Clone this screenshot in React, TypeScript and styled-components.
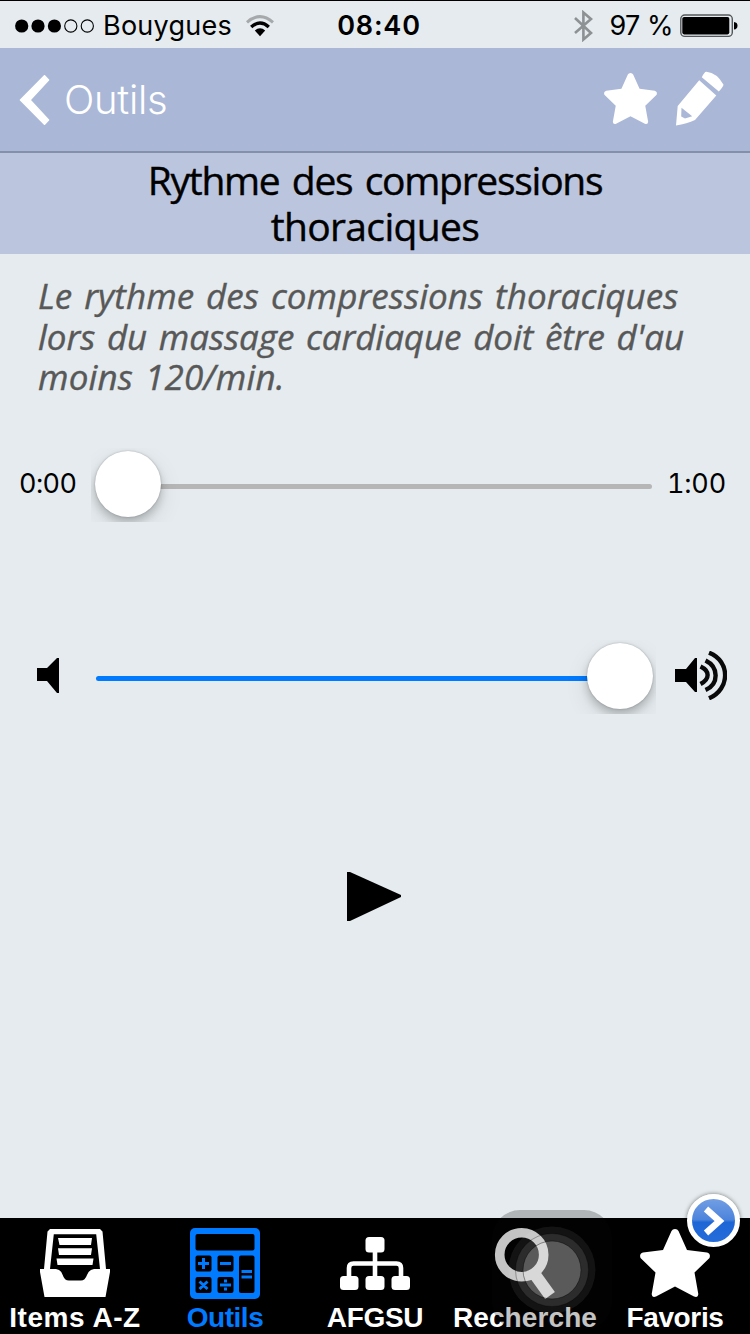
import React from 'react';
import styled, { createGlobalStyle, css } from 'styled-components';

const Global = createGlobalStyle`
  * { box-sizing: border-box; }
  body { margin: 0; background: #e5ebee; }
  svg { display: block; flex: none; }
`;

const Screen = styled.div`
  width: 750px;
  height: 1334px;
  display: flex;
  flex-direction: column;
  background: #e5ebee;
  color: #000;
  font-family: Inter, "Liberation Sans", sans-serif;
  position: relative;
  overflow: hidden;
`;

const StatusBar = styled.header`
  height: 48px;
  flex: none;
  display: grid;
  grid-template-columns: 1fr auto 1fr;
  align-items: center;
  padding: 2px 12px 0 15px;
  border-top: 1px solid #000;
  font-size: 27px;
  line-height: 45px;
`;

const StatusGroup = styled.div<{ $end?: boolean }>`
  display: flex;
  align-items: center;
  justify-content: ${p => (p.$end ? 'flex-end' : 'flex-start')};
  white-space: nowrap;
`;

const Carrier = styled.span`
  margin: 0 14px 0 8px;
  letter-spacing: 0.25px;
`;

const Clock = styled.span`
  padding-left: 5px;
  font-weight: 600;
  letter-spacing: 0.8px;
`;

const Percent = styled.span`
  margin: 0 7px 0 16px;
  letter-spacing: -0.5px;
`;

const NavBar = styled.nav`
  height: 105px;
  flex: none;
  display: flex;
  align-items: center;
  padding: 0 26px 0 19px;
  background: #aab7d6;
  border-bottom: 2px solid #8490a8;
  color: #fff;
`;

const BackLabel = styled.span`
  flex: 1;
  margin-left: 14px;
  font-size: 40px;
  font-weight: 300;
  line-height: 48px;
  letter-spacing: -0.3px;
`;

const Actions = styled.div`
  display: flex;
  align-items: center;
  gap: 18px;
  padding-bottom: 2px;
`;

const TitleBand = styled.h1`
  height: 101px;
  flex: none;
  margin: 0;
  padding-top: 4px;
  background: #bbc5de;
  text-align: center;
  word-spacing: 3.5px;
  font: 400 39px/46px "Open Sans", "Noto Sans", sans-serif;
  -webkit-text-stroke: 0.4px currentColor;
`;

const Line = styled.span<{ $track: number }>`
  display: block;
  white-space: nowrap;
  letter-spacing: ${p => p.$track}px;
`;

const Advice = styled.p`
  height: 124px;
  flex: none;
  margin: 22px 0 0 38px;
  color: #585858;
  word-spacing: 2.7px;
  font: italic 400 35px/40.5px "Open Sans", "Noto Sans", sans-serif;
  -webkit-text-stroke: 0.4px currentColor;
`;

const SliderRow = styled.div<{ $top: number }>`
  height: 74px;
  flex: none;
  display: flex;
  align-items: center;
  margin-top: ${p => p.$top}px;
`;

const SideCell = styled.div<{ $width: number; $pad: number; $lift: number; $track?: number }>`
  width: ${p => p.$width}px;
  flex: none;
  padding: 0 0 ${p => p.$lift}px ${p => p.$pad}px;
  font-size: 27px;
  font-variant-numeric: tabular-nums;
  letter-spacing: ${p => p.$track ?? 0}px;
  line-height: 40px;
  white-space: nowrap;
`;

const Track = styled.div<{ $filled?: boolean }>`
  width: 556px;
  height: 5px;
  margin-top: 3px;
  border-radius: 3px;
  background: ${p => (p.$filled ? '#007aff' : '#b6b6b6')};
  position: relative;
`;

const ThumbHalo = styled.div<{ $end?: boolean }>`
  position: absolute;
  top: -36px;
  width: 96px;
  height: 74px;
  overflow: hidden;
  ${p => p.$end ? css`right: -4px;` : css`left: -5px;`}
  &::after {
    content: "";
    position: absolute;
    top: 3px;
    ${p => p.$end ? css`right: 3px;` : css`left: 4px;`}
    width: 66px;
    height: 66px;
    border-radius: 50%;
    background: #fff;
    box-shadow: 0 0 2px rgba(0, 0, 0, 0.25), 0 5px 9px rgba(0, 0, 0, 0.2), 0 9px 24px rgba(0, 0, 0, 0.1);
  }
`;

const PlayArea = styled.div`
  flex: 1;
  padding: 158px 0 0 347px;
`;

const TabBar = styled.footer`
  height: 116px;
  flex: none;
  display: grid;
  grid-template-columns: repeat(5, 150px);
  background: #000;
`;

const Tab = styled.div<{ $active?: boolean }>`
  display: flex;
  flex-direction: column;
  align-items: center;
  padding-top: 9px;
  color: ${p => (p.$active ? '#007aff' : '#fff')};
`;

const TabIcon = styled.div`
  height: 72px;
  display: grid;
  place-items: center;
`;

const TabLabel = styled.span<{ $track: number }>`
  margin-top: 3px;
  white-space: nowrap;
  font: 700 28px/32px "Liberation Sans", Arial, sans-serif;
  letter-spacing: ${p => p.$track}px;
`;

const AssistiveButton = styled.div`
  position: absolute;
  left: 492px;
  top: 1210px;
  width: 120px;
  height: 120px;
  border-radius: 28px;
  background: rgba(8, 8, 8, 0.24);
  display: grid;
  place-items: center;
`;

const Badge = styled.div`
  position: absolute;
  left: 687px;
  top: 1194px;
  width: 53px;
  height: 53px;
  border: 5px solid #fff;
  border-radius: 50%;
  background: linear-gradient(#729ee3 0%, #4c84dc 48%, #1d66d5 54%, #256cdb 100%);
  box-shadow: 0 0 4px rgba(0, 0, 0, 0.5);
  display: grid;
  place-items: center;
`;

const SignalDots = () => (
  <svg width="80" height="14" viewBox="0 0 80 14">
    {[6.7, 23, 39.4].map(x => <circle key={x} cx={x} cy="7" r="6.6" />)}
    {[55.8, 72.3].map(x => <circle key={x} cx={x} cy="7" r="6.1" fill="none" stroke="#000" strokeWidth="1.1" />)}
  </svg>
);

const Wifi = () => (
  <svg width="28" height="22" viewBox="0 0 28 22" fill="none" strokeWidth="3">
    <path d="M1 7.3Q14-4.1 27 7.3" stroke="#a5a9ab" />
    <path d="M5.2 12Q14 4.2 22.8 12" stroke="#000" strokeWidth="3.4" />
    <path d="M8.8 15.6Q14 11 19.2 15.6L14 21.2Z" fill="#000" />
  </svg>
);

const Bluetooth = () => (
  <svg width="19" height="32" viewBox="0 0 19 32" fill="none" stroke="#8d9194" strokeWidth="2.6">
    <path d="M1 8L17 23 9.4 29.5V2.5L17 9 1 23" />
  </svg>
);

const Battery = () => (
  <svg width="58" height="24" viewBox="0 0 58 24">
    <rect x=".8" y="1" width="51.5" height="21.4" rx="4" fill="none" stroke="#55585a" strokeWidth="1.4" />
    <rect x="2.3" y="3" width="47" height="17.4" rx="1.8" />
    <path d="M54 8Q57.5 8.4 57.5 11.7T54 15.5Z" />
  </svg>
);

const BackArrow = () => (
  <svg width="31" height="50" viewBox="0 0 31 50">
    <path d="M25.5.8L29.5 5 11 25 29.5 45 25.5 49.2 1.5 25Z" fill="#fff" stroke="#fff" strokeWidth="1.6" strokeLinejoin="round" />
  </svg>
);

const Star = ({ width, height }: { width: number; height: number }) => (
  <svg width={width} height={height} viewBox="0 0 70 68" preserveAspectRatio="none" fill="currentColor">
    <path d="M35 0Q37.5 0 38.5 2L47 21 67 23.5Q71 24.5 69.5 29L54.5 43.5 58.3 65Q58 69 54 67.5L35 57.5 16 67.5Q12 69 11.7 65L15.5 43.5.5 29Q-1 24.5 3 23.5L23 21 31.5 2Q32.5 0 35 0Z" />
  </svg>
);

const Pencil = () => (
  <svg width="49" height="55" viewBox="0 0 49 55" fill="#fff">
    <path d="M31.5.8Q42 2 48.4 13.5Q49 15 43.8 20.5L26.8 6.2Q30-.2 31.5.8Z" />
    <path fillRule="evenodd" d="M24.2 9.3L41.3 24.4 20 49Q12 52.5 1 54.5L2.7 35ZM6.5 36.8L6.2 45.5 10 47.5 17.2 45.3Z" />
  </svg>
);

const SpeakerLow = () => (
  <svg width="22" height="35" viewBox="0 0 22 35"><path d="M0 10H10L20 0H22V35H20L10 23H0Z" /></svg>
);

const SpeakerHigh = () => (
  <svg width="52" height="49" viewBox="0 0 52 49">
    <path d="M0 18H11L20 7H22V41H20L11 31H0Z" />
    <g fill="none" stroke="#090909" strokeWidth="4.4">
      <path d="M25.5 15.5C35 20 35 28 25.5 33" />
      <path d="M30.5 9.5C44 16 44 33 30.5 39" />
      <path d="M34 1.7C55.5 10 55.5 38 34 47.3" />
    </g>
  </svg>
);

const Tray = () => (
  <svg width="70" height="72" viewBox="0 0 70 72" fill="#fff">
    <path fillRule="evenodd" d="M10 2H60L62.5 4.5 66 42H70V45L65.5 70H4.5L0 45V42H4L7.5 4.5ZM13.8 7.3L10 42H16Q21 42.5 22.7 48T29 53.5H41Q45 53.5 47 48T54 42H60L56.2 7.3Z" />
    <path d="M18 11H52L51 18H19.5ZM18 21.3H52L51 28H19ZM16.5 31.5H53.5L52.5 38H17.5Z" />
  </svg>
);

const Calculator = () => (
  <svg width="70" height="72" viewBox="0 0 70 72">
    <rect y="1" width="70" height="71" rx="5" fill="#007aff" />
    <g fill="#000">
      <rect x="5.5" y="7" width="59" height="16.5" rx="2" />
      <rect x="5.5" y="28.5" width="16" height="16" rx="2" />
      <rect x="27.5" y="28.5" width="16" height="16" rx="2" />
      <rect x="49" y="28.5" width="15.5" height="37.5" rx="2" />
      <rect x="5.5" y="50" width="16" height="16" rx="2" />
      <rect x="27.5" y="50" width="16" height="16" rx="2" />
    </g>
    <path d="M8 36.5H19M13.5 31V42M30 36.5H41M51.5 44.5H62M51.5 50H62M9.5 54.5L17.5 62M17.5 54.5L9.5 62M30 58H41M35.5 52.5V55.5M35.5 60.5V63.5" stroke="#007aff" strokeWidth="3" />
  </svg>
);

const Tree = () => (
  <svg width="70" height="72" viewBox="0 0 70 72" fill="#fff">
    <rect x="25.5" y="10" width="19" height="15.5" rx="3.5" />
    <rect y="49" width="18.5" height="14" rx="3.5" />
    <rect x="25.5" y="49" width="19" height="14" rx="3.5" />
    <rect x="51.5" y="49" width="18.5" height="14" rx="3.5" />
    <path d="M35 24V51M9 51V41Q9 36.5 13.5 36.5H56.5Q61 36.5 61 41V51" fill="none" stroke="#fff" strokeWidth="4.6" />
  </svg>
);

const Magnifier = () => (
  <svg width="70" height="72" viewBox="0 0 70 72" fill="none" stroke="#fff">
    <circle cx="31.7" cy="27.7" r="22" strokeWidth="9.6" />
    <path d="M44.5 47L60 68.5" strokeWidth="12" />
  </svg>
);

const Rings = () => (
  <svg width="90" height="90" viewBox="0 0 90 90" fill="#fff">
    <circle cx="45" cy="45" r="43.5" fillOpacity=".07" />
    <circle cx="45" cy="45" r="36.5" fillOpacity=".11" stroke="#000" strokeOpacity=".3" />
    <circle cx="45" cy="45" r="29" fillOpacity=".22" stroke="#000" strokeOpacity=".4" />
  </svg>
);

export default function App() {
  return (
    <Screen>
      <Global />
      <StatusBar>
        <StatusGroup><SignalDots /><Carrier>Bouygues</Carrier><Wifi /></StatusGroup>
        <Clock>08:40</Clock>
        <StatusGroup $end><Bluetooth /><Percent>97 %</Percent><Battery /></StatusGroup>
      </StatusBar>
      <NavBar>
        <BackArrow />
        <BackLabel>Outils</BackLabel>
        <Actions>
          <Star width={53} height={51} />
          <Pencil />
        </Actions>
      </NavBar>
      <TitleBand>
        <Line $track={-1.28}>Rythme des compressions</Line>
        <Line $track={-0.65}>thoraciques</Line>
      </TitleBand>
      <Advice>
        <Line $track={0.07}>Le rythme des compressions thoraciques</Line>
        <Line $track={-0.07}>lors du massage cardiaque doit être d'au</Line>
        <Line $track={0.16}>moins 120/min.</Line>
      </Advice>
      <SliderRow $top={48}>
        <SideCell $width={96} $pad={19} $lift={2} $track={-0.6}>0:00</SideCell>
        <Track><ThumbHalo /></Track>
        <SideCell $width={98} $pad={15} $lift={2} $track={-0.2}>1:00</SideCell>
      </SliderRow>
      <SliderRow $top={118}>
        <SideCell $width={96} $pad={37} $lift={4}><SpeakerLow /></SideCell>
        <Track $filled><ThumbHalo $end /></Track>
        <SideCell $width={98} $pad={23} $lift={4}><SpeakerHigh /></SideCell>
      </SliderRow>
      <PlayArea>
        <svg width="54" height="49" viewBox="0 0 54 49"><path d="M0 0H3L54 23V25L3 49H0Z" /></svg>
      </PlayArea>
      <TabBar>
        <Tab><TabIcon><Tray /></TabIcon><TabLabel $track={0.55}>Items A-Z</TabLabel></Tab>
        <Tab $active><TabIcon><Calculator /></TabIcon><TabLabel $track={-0.45}>Outils</TabLabel></Tab>
        <Tab><TabIcon><Tree /></TabIcon><TabLabel $track={-0.3}>AFGSU</TabLabel></Tab>
        <Tab><TabIcon><Magnifier /></TabIcon><TabLabel $track={0.1}>Recherche</TabLabel></Tab>
        <Tab><TabIcon><Star width={70} height={68} /></TabIcon><TabLabel $track={-0.35}>Favoris</TabLabel></Tab>
      </TabBar>
      <AssistiveButton><Rings /></AssistiveButton>
      <Badge>
        <svg width="24" height="32" viewBox="0 0 24 32" fill="none" stroke="#fff" strokeWidth="6.5">
          <path d="M4 4L17.5 16 4 28" />
        </svg>
      </Badge>
    </Screen>
  );
}
